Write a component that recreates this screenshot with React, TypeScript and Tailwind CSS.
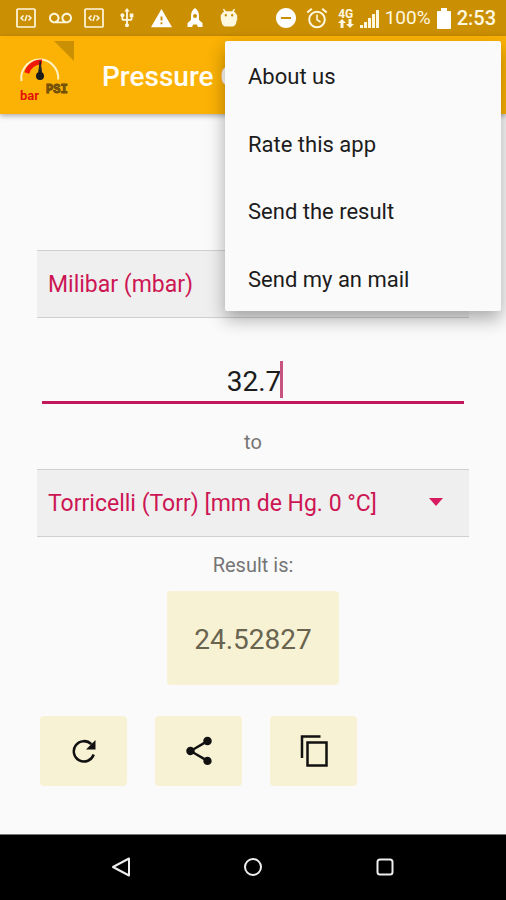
import { useState } from "react";
import { MdDoNotDisturbOn, MdShare, MdUsb, MdVoicemail, MdWarning } from "react-icons/md";

const menuItems = ["About us", "Rate this app", "Send the result", "Send my an mail"];

const units = ["Milibar (mbar)", "Torricelli (Torr) [mm de Hg. 0 °C]"];

function CodeIcon() {
  return (
    <svg width="20" height="20" viewBox="0 0 20 20" fill="none" stroke="currentColor">
      <rect x="1" y="1" width="18" height="18" rx="1" strokeWidth="1.7" />
      <path d="M7.500 7.500L5 10l2.500 2.500M12.500 7.500L15 10l-2.500 2.500M11 7l-2 6" strokeWidth="1.500" />
    </svg>
  );
}

function RocketIcon() {
  return (
    <svg width="18" height="20" viewBox="0 0 18 20" fill="currentColor">
      <path
        fillRule="evenodd"
        d="M9 0C6.500 1.500 5 4.500 5 8v4L1.500 15v4H6l1.200-2.500h3.600L12 19h4.500v-4L13 12V8c0-3.500-1.500-6.500-4-8zm0 6a2 2 0 110 4 2 2 0 010-4z"
      />
    </svg>
  );
}

function AndroidHeadIcon() {
  return (
    <svg width="18" height="20" viewBox="0 0 18 20" fill="currentColor">
      <path
        fillRule="evenodd"
        d="M4 .8l2 2.400h6l2-2.400 1.200.8-1.400 2.200C15.500 4.300 16 5 16 6.500h1.200v6H16.500c0 4-2 6-4.500 6H6c-2.500 0-4.500-2-4.500-6H.800v-6H2C2 5 2.500 4.300 4.200 3.800L2.800 1.600zM5.800 6a1.200 1.200 0 100 2.400 1.200 1.200 0 000-2.400zm6.400 0a1.200 1.200 0 100 2.400 1.200 1.200 0 000-2.400z"
      />
    </svg>
  );
}

function AlarmIcon() {
  return (
    <svg width="22" height="22" viewBox="0 0 22 22" fill="none" stroke="currentColor" strokeWidth="2">
      <circle cx="11" cy="12.500" r="7.800" />
      <path d="M11 7.500v5.300l3.500 2.200" strokeWidth="1.600" />
      <path d="M1.300 5.500l4.500-3.800M20.700 5.500l-4.500-3.800" />
    </svg>
  );
}

function RefreshIcon() {
  return (
    <svg width="24" height="24" viewBox="0 0 24 24" fill="none" stroke="currentColor" strokeWidth="2.500">
      <path d="M19.300 5.200A10.200 10.200 0 1021.700 15.500" />
      <path d="M23.500 1v9.500H14z" fill="currentColor" stroke="none" />
    </svg>
  );
}

function CopyIcon() {
  return (
    <svg width="28" height="34" viewBox="0 0 28 34" fill="none" stroke="currentColor" strokeWidth="2.500">
      <path d="M2 24V2.500h18.500" />
      <rect x="7.500" y="8.500" width="19" height="23" />
    </svg>
  );
}

function StatusBar() {
  return (
    <div className="flex h-9 items-center justify-between bg-[#ca8f03] pl-[9px] pr-[10px] text-[#fff8e0]">
      <div className="flex">
        <span className="flex w-[34px] items-center justify-center"><CodeIcon /></span>
        <span className="flex w-[34px] items-center justify-center"><MdVoicemail size={23} /></span>
        <span className="flex w-[33px] items-center justify-center"><CodeIcon /></span>
        <span className="flex w-[34px] items-center justify-center"><MdUsb size={22} /></span>
        <span className="flex w-[34px] items-center justify-center text-white"><MdWarning size={23} /></span>
        <span className="flex w-[34px] items-center justify-center text-white"><RocketIcon /></span>
        <span className="flex w-[34px] items-center justify-center"><AndroidHeadIcon /></span>
      </div>
      <div className="flex items-center gap-[6px]">
        <div className="flex items-center gap-2">
          <MdDoNotDisturbOn size={24} className="text-white" />
          <AlarmIcon />
          <span className="flex flex-col items-center pl-[2px]">
            <span className="text-[12px] font-bold leading-[10px]">4G</span>
            <svg width="16" height="9" viewBox="0 0 16 9" fill="currentColor">
              <path d="M4 0l4 4H5.500v5h-3V4H0zM12 9l4-4h-2.500V0h-3v5H8z" />
            </svg>
          </span>
        </div>
        <svg width="19" height="19" viewBox="0 0 19 19" fill="currentColor">
          <path d="M0 16h3v3H0zM4 13h3v6H4zM8 9h3v10H8zM12 5h3v14h-3zM16 1h3v18h-3z" />
        </svg>
        <span className="text-[19px] leading-6">100%</span>
        <svg width="14" height="21" viewBox="0 0 14 21" fill="#fff">
          <path d="M4 0h6v3h3a1 1 0 011 1v16a1 1 0 01-1 1H1a1 1 0 01-1-1V4a1 1 0 011-1h3z" />
        </svg>
        <span className="text-[20px] font-medium leading-6">2:53</span>
      </div>
    </div>
  );
}

function Logo() {
  return (
    <svg width="62" height="78" viewBox="0 0 62 78" className="shrink-0">
      <path d="M40 5h20v20z" fill="#ca8f03" />
      <path d="M7.500 45A18.500 18.500 0 1144.200 43.500" fill="none" stroke="#fff3c4" strokeWidth="2" />
      <path d="M12.800 37A15 15 0 0128 26" fill="none" stroke="#f01808" strokeWidth="5" />
      <path d="M26.200 25l1.400 12h-3z" fill="#222" stroke="#222" />
      <circle cx="26" cy="40" r="4" fill="#1b1b1b" />
      <text x="6" y="64" fontSize="13" fontWeight="700" fill="#e31208">bar</text>
      <text
        x="32"
        y="57"
        fontSize="12"
        fontWeight="700"
        fontFamily="Liberation Mono, monospace"
        fill="#8a6205"
        stroke="#6b4b08"
      >
        PSI
      </text>
    </svg>
  );
}

type UnitSelectProps = {
  label: string;
  value: string;
  onChange: (value: string) => void;
};

function UnitSelect({ label, value, onChange }: UnitSelectProps) {
  return (
    <div className="relative">
      <select
        aria-label={label}
        value={value}
        onChange={(e) => onChange(e.target.value)}
        className="block h-[68px] w-full appearance-none border-y border-[#cfcfcf] bg-[#efefef] pl-[11px] pr-14 pt-[3px] text-[23px] text-[#cc1653] outline-none"
      >
        {units.map((unit) => (
          <option key={unit}>{unit}</option>
        ))}
      </select>
      <svg
        width="14"
        height="8"
        viewBox="0 0 14 8"
        className="pointer-events-none absolute right-[26px] top-[29px]"
      >
        <path d="M0 0h14L7 8z" fill="#d81b60" />
      </svg>
    </div>
  );
}

function OverflowMenu() {
  return (
    <div className="absolute right-[5px] top-[41px] z-10 grid h-[270px] w-[276px] grid-rows-4 rounded-[2px] bg-[#fafafa] shadow-[0_8px_18px_rgba(0,0,0,0.32)]">
      {menuItems.map((item) => (
        <button key={item} className="px-[23px] pt-1 text-left text-[22px] text-[#1c1c1c]">
          {item}
        </button>
      ))}
    </div>
  );
}

export default function App() {
  const [from, setFrom] = useState(units[0]);
  const [to, setTo] = useState(units[1]);
  const [amount, setAmount] = useState("32.7");

  return (
    <div className="relative flex min-h-screen flex-col bg-[#fafafa] font-[Roboto,sans-serif]">
      <StatusBar />
      <header className="flex h-[78px] items-center overflow-hidden bg-[#fbb205] pl-[14px] shadow-[0_2px_5px_rgba(0,0,0,0.3)]">
        <Logo />
        <h1 className="ml-[26px] whitespace-nowrap pt-1 text-[28px] font-medium text-[#fffdf5]">
          Pressure C
        </h1>
      </header>
      <OverflowMenu />

      <main className="flex flex-1 flex-col px-[37px] pb-12 pt-[136px]">
        <UnitSelect label="From unit" value={from} onChange={setFrom} />
        <div className="relative mx-[5px] mt-[42px]">
          <input
            aria-label="Value"
            inputMode="decimal"
            value={amount}
            onChange={(e) => setAmount(e.target.value)}
            className="block h-11 w-full border-b-[3px] border-[#c2185b] bg-transparent pl-[2px] pt-[2px] text-center text-[28px] text-[#1c1c1c] outline-none"
          />
          <span className="absolute left-1/2 top-px ml-[27px] h-[37px] w-[3px] bg-[#c9537f]" />
        </div>
        <p className="mt-[26px] text-center text-[20px] leading-6 text-[#757575]">to</p>
        <div className="mt-[15px]">
          <UnitSelect label="To unit" value={to} onChange={setTo} />
        </div>
        <p className="mt-4 text-center text-[20px] leading-6 text-[#757575]">Result is:</p>
        <output className="mt-[14px] flex h-[94px] items-center self-center rounded bg-[#f8f2d5] px-[27px] pt-1 text-[28px] text-[#68644f]">
          24.52827
        </output>
        <div className="mt-[31px] flex gap-7 pl-[3px] text-[#111]">
          <button aria-label="Refresh" className="flex h-[70px] w-[87px] items-center justify-center rounded bg-[#f8f2d5]">
            <RefreshIcon />
          </button>
          <button aria-label="Share" className="flex h-[70px] w-[87px] items-center justify-center rounded bg-[#f8f2d5]">
            <MdShare size={34} />
          </button>
          <button aria-label="Copy" className="flex h-[70px] w-[87px] items-center justify-center rounded bg-[#f8f2d5]">
            <CopyIcon />
          </button>
        </div>
      </main>

      <nav className="flex h-[67px] items-center justify-center gap-[112px] border-t border-[#777] bg-black pb-[2px] text-[#eee]">
        <button aria-label="Back">
          <svg width="20" height="20" viewBox="0 0 20 20" fill="none" stroke="currentColor" strokeWidth="2" strokeLinejoin="round">
            <path d="M18 1.500v17L2 10z" />
          </svg>
        </button>
        <button aria-label="Home">
          <svg width="20" height="20" viewBox="0 0 20 20" fill="none" stroke="currentColor" strokeWidth="2">
            <circle cx="10" cy="10" r="8" />
          </svg>
        </button>
        <button aria-label="Recent apps">
          <svg width="20" height="20" viewBox="0 0 20 20" fill="none" stroke="currentColor" strokeWidth="2">
            <rect x="2.500" y="2.500" width="15" height="15" rx="2.500" />
          </svg>
        </button>
      </nav>
    </div>
  );
}
